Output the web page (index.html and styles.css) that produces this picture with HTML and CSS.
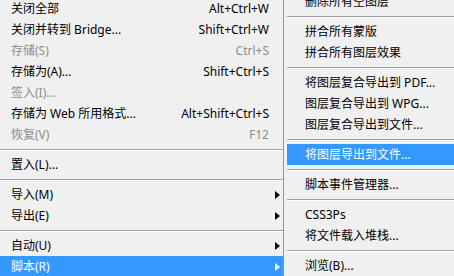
FILE: index.html
```html
<!DOCTYPE html>
<html lang="zh-CN">
	<head>
		<meta charset="UTF-8">
		<title>文件菜单</title>
		<link rel="stylesheet" href="styles.css">
	</head>
	<body>
	<div class="menu menu-main">
		<div class="item"><span class="label">关闭全部</span><span class="key">Alt+Ctrl+W</span><span class="sub"></span></div>
		<div class="item"><span class="label">关闭并转到 Bridge...</span><span class="key">Shift+Ctrl+W</span><span class="sub"></span></div>
		<div class="item disabled"><span class="label">存储(S)</span><span class="key">Ctrl+S</span><span class="sub"></span></div>
		<div class="item"><span class="label">存储为(A)...</span><span class="key">Shift+Ctrl+S</span><span class="sub"></span></div>
		<div class="item disabled"><span class="label">签入(I)...</span><span class="key"></span><span class="sub"></span></div>
		<div class="item"><span class="label">存储为 Web 所用格式...</span><span class="key">Alt+Shift+Ctrl+S</span><span class="sub"></span></div>
		<div class="item disabled"><span class="label">恢复(V)</span><span class="key">F12</span><span class="sub"></span></div>
		<div class="sep"></div>
		<div class="item"><span class="label">置入(L)...</span><span class="key"></span><span class="sub"></span></div>
		<div class="sep"></div>
		<div class="item"><span class="label">导入(M)</span><span class="key"></span><span class="sub"><i class="arrow"></i></span></div>
		<div class="item"><span class="label">导出(E)</span><span class="key"></span><span class="sub"><i class="arrow"></i></span></div>
		<div class="sep"></div>
		<div class="item"><span class="label">自动(U)</span><span class="key"></span><span class="sub"><i class="arrow"></i></span></div>
		<div class="item active"><span class="label">脚本(R)</span><span class="key"></span><span class="sub"><i class="arrow"></i></span></div>
	</div>
	<div class="menu menu-sub">
		<div class="item"><span class="label">删除所有空图层</span></div>
		<div class="sep"></div>
		<div class="item"><span class="label">拼合所有蒙版</span></div>
		<div class="item"><span class="label">拼合所有图层效果</span></div>
		<div class="sep"></div>
		<div class="item"><span class="label">将图层复合导出到 PDF...</span></div>
		<div class="item"><span class="label">图层复合导出到 WPG...</span></div>
		<div class="item"><span class="label">图层复合导出到文件...</span></div>
		<div class="sep"></div>
		<div class="item active"><span class="label">将图层导出到文件...</span></div>
		<div class="sep"></div>
		<div class="item"><span class="label">脚本事件管理器...</span></div>
		<div class="sep"></div>
		<div class="item"><span class="label">CSS3Ps</span></div>
		<div class="item"><span class="label">将文件载入堆栈...</span></div>
		<div class="sep"></div>
		<div class="item"><span class="label">浏览(B)...</span></div>
	</div>
	</body>
</html>
```

FILE: styles.css
```css
html, body {
	margin: 0;
	height: 100%;
	overflow: hidden;
}
body {
	font-family: 'Noto Sans', 'Noto Sans CJK SC', sans-serif;
	font-size: 12px;
	color: #000;
	background-color: #f0f0f0;
	display: flex;
	align-items: flex-start;
}
.menu {
	display: flex;
	flex-direction: column;
}
.menu-main {
	width: 283px;
	flex-shrink: 0;
	margin-top: -2px;
}
.menu-sub {
	flex: 1;
	margin-top: -9px;
	padding-left: 3px;
	border-left: 1px solid #979797;
	min-height: 300px;
}
.item {
	display: flex;
	align-items: center;
	height: 21px;
	line-height: 21px;
	white-space: nowrap;
}
.menu-main .item {
	padding-left: 11px;
}
.menu-sub .item {
	padding-left: 18px;
}
.label {
	flex: 1;
}
.key {
	text-align: right;
}
.sub {
	width: 14px;
	display: flex;
	align-items: center;
	padding-left: 6px;
	box-sizing: border-box;
}
.arrow {
	width: 0;
	height: 0;
	border-left: 5px solid #000;
	border-top: 4px solid transparent;
	border-bottom: 4px solid transparent;
}
.disabled {
	color: #8d8d8d;
}
.active {
	background-color: #3399ff;
	color: #fff;
}
.active .arrow {
	border-left-color: #fff;
}
.sep {
	margin: 4px 0 3px;
	border-top: 1px solid #a0a0a0;
	border-bottom: 1px solid #fff;
}
```
